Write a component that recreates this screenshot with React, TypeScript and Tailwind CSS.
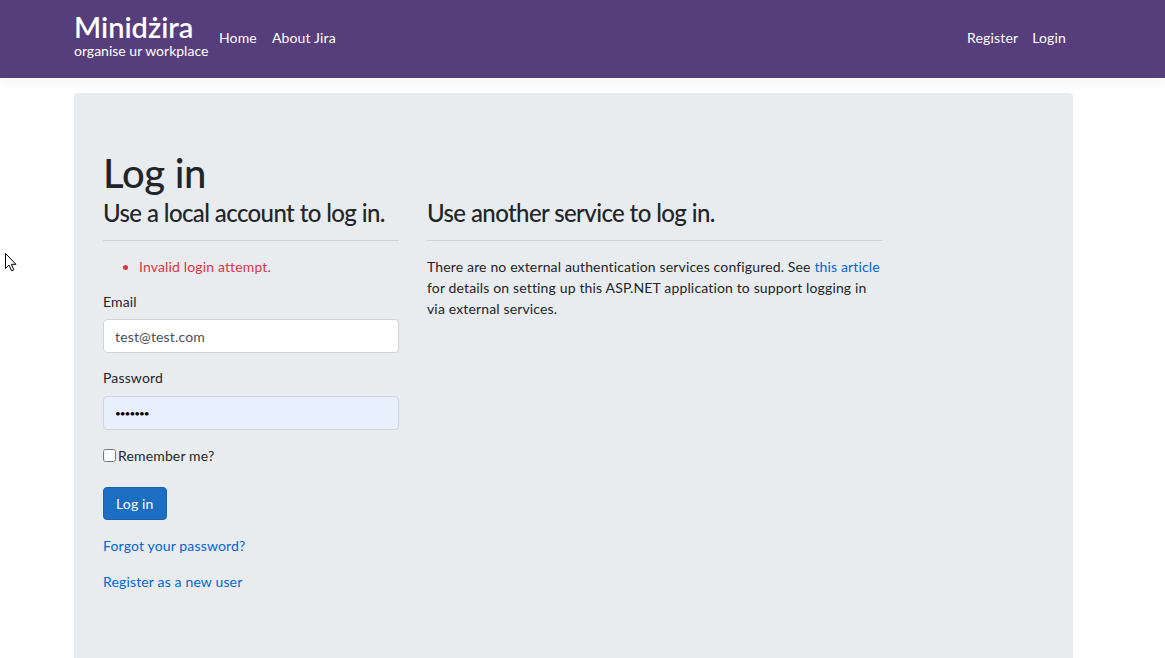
import React from "react";

export default function App() {
  return (
    <div className="relative min-h-screen bg-white font-['Lato','Noto_Sans',sans-serif] text-[#212529] overflow-hidden">
      <header className="h-[78px] bg-[#563d7c] shadow-[0_4px_12px_rgba(0,0,0,0.05)] relative z-10">
        <div className="ml-[74px] w-[999px] flex items-start h-full text-white">
          <a className="flex flex-col w-[132px] pt-[11px]">
            <span className="text-[29px] leading-[32px] font-semibold tracking-[0px]">Minidżira</span>
            <span className="text-[14px] leading-[16px] whitespace-nowrap">organise ur workplace</span>
          </a>
          <nav className="flex pt-[27px] ml-[6px] text-[14px] leading-[21px] tracking-[0.15px]">
            <a className="px-[7px]">Home</a>
            <a className="px-[7px] ml-[1px]">About Jira</a>
          </nav>
          <nav className="flex pt-[27px] ml-auto text-[14px] leading-[21px] tracking-[0.15px]">
            <a className="px-[7px]">Register</a>
            <a className="px-[7px]">Login</a>
          </nav>
        </div>
      </header>

      <main className="ml-[74px] w-[999px] mt-[15px] bg-[#e9ecef] rounded-[4px] h-[600px] pt-[54px] px-[29px] tracking-[0.15px]">
        <h1 className="pt-[2px] text-[40px] leading-[48px] font-medium tracking-[-0.3px]">Log in</h1>
        <div className="flex gap-[28px] mt-[1px]">
          <section className="w-[296px]">
            <h4 className="text-[24px] leading-[29px] font-medium whitespace-nowrap tracking-[-0.6px]">Use a local account to log in.</h4>
            <hr className="mt-[13px] border-0 border-t border-[#cfd2d6]" />
            <ul className="mt-[15px] pl-[36px] list-disc text-[#dc3545] text-[14px] leading-[21px]">
              <li>Invalid login attempt.</li>
            </ul>
            <div className="mt-[14px] text-[14px] leading-[21px]">Email</div>
            <div className="mt-[7px] h-[34px] bg-white border border-[#ced4da] rounded-[4px] flex items-center px-[11px] text-[14px] text-[#495057]">
              test@test.com
            </div>
            <div className="mt-[14px] text-[14px] leading-[21px]">Password</div>
            <div className="mt-[8px] h-[34px] bg-[#e8f0fe] border border-[#ced4da] rounded-[4px] flex items-center px-[11px] text-[10px] text-black tracking-[-1px]">
              •••••••
            </div>
            <label className="mt-[15px] flex items-center text-[14px] leading-[21px]">
              <input type="checkbox" className="w-[13px] h-[13px] m-0 mr-[2px]" />
              <span>Remember me?</span>
            </label>
            <button className="mt-[21px] h-[33px] px-[12px] bg-[#1b6ec2] border border-[#1861ac] rounded-[4px] text-white text-[14px] leading-[21px]">
              Log in
            </button>
            <div className="mt-[15px] text-[14px] leading-[21px]">
              <a className="text-[#0366d6]">Forgot your password?</a>
            </div>
            <div className="mt-[15px] text-[14px] leading-[21px]">
              <a className="text-[#0366d6]">Register as a new user</a>
            </div>
          </section>
          <section className="w-[456px]">
            <h4 className="text-[24px] leading-[29px] font-medium whitespace-nowrap tracking-[-0.6px]">Use another service to log in.</h4>
            <hr className="mt-[13px] border-0 border-t border-[#cfd2d6]" />
            <p className="mt-[15px] text-[14px] leading-[21px]">
              There are no external authentication services configured. See{" "}
              <a className="text-[#0366d6]">this article</a> for details on setting up this ASP.NET application to
              support logging in via external services.
            </p>
          </section>
        </div>
      </main>

      <svg className="absolute left-[4px] top-[252px]" width="13" height="21" viewBox="0 0 13 21">
        <path d="M1.5 1.5 L1.5 16.5 L5 13 L7.5 18.8 L9.8 17.8 L7.4 12.3 L12 12.3 Z" fill="white" stroke="black" strokeWidth="1" strokeLinejoin="miter" />
      </svg>
    </div>
  );
}
